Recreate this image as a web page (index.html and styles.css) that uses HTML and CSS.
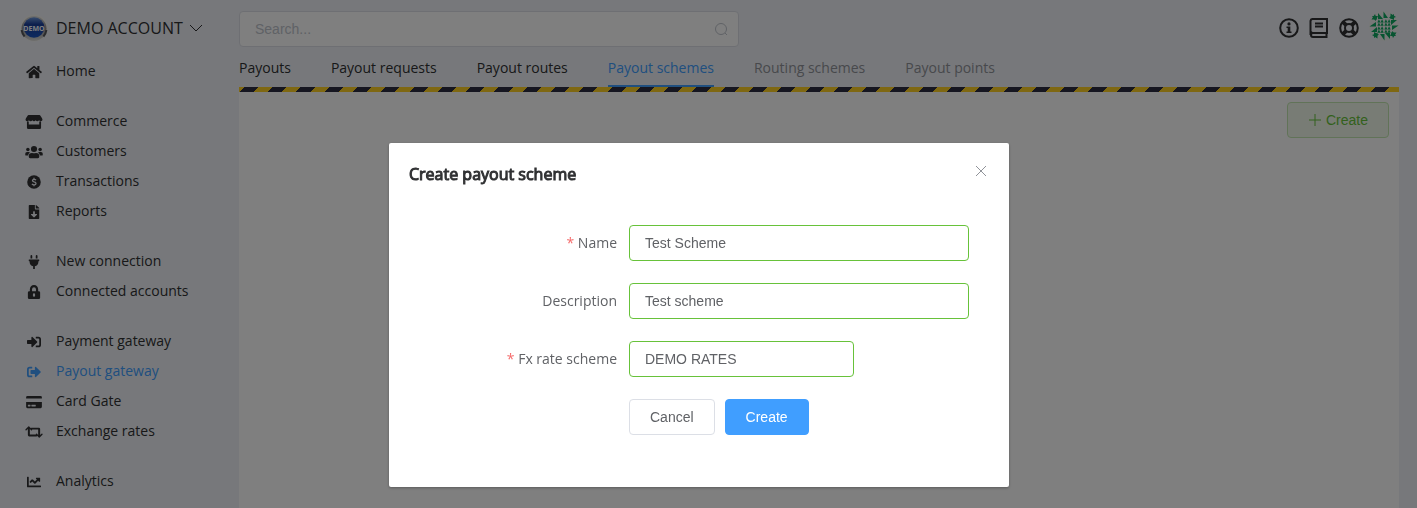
FILE: index.html
```html
<!DOCTYPE html>
<html lang="en">
<head>
<meta charset="utf-8">
<title>Payout schemes</title>
<link rel="stylesheet" href="styles.css">
</head>
<body>
<div class="app">
  <aside class="sidebar">
    <button class="account" type="button">
      <svg class="account-logo" viewBox="0 0 28 28" aria-hidden="true">
        <defs>
          <linearGradient id="ring" x1="0" y1="0" x2="0" y2="1"><stop offset="0" stop-color="#dcdcda"/><stop offset=".5" stop-color="#8d8d90"/><stop offset="1" stop-color="#dddddb"/></linearGradient>
          <linearGradient id="ball" x1="0" y1="0" x2="0" y2="1"><stop offset="0" stop-color="#6f9ade"/><stop offset=".35" stop-color="#1b3f9a"/><stop offset="1" stop-color="#1d55c0"/></linearGradient>
        </defs>
        <circle cx="14" cy="14" r="13.5" fill="#f4f3ee"/>
        <circle cx="14" cy="14.5" r="12.5" fill="url(#ring)"/>
        <path d="M1.600 16a12.600 12.600 0 0 0 3 6.500M26.400 16a12.600 12.600 0 0 1-3 6.500" fill="none" stroke="#55565a" stroke-width="2"/>
        <circle cx="14" cy="13.500" r="10.300" fill="url(#ball)"/>
        <text x="14" y="17" text-anchor="middle" class="logo-text">DEMO</text>
      </svg>
      <span>DEMO ACCOUNT</span>
      <svg class="chevron" viewBox="0 0 14 14" aria-hidden="true"><path d="M1 4l6 6 6-6"/></svg>
    </button>
    <nav class="menu">
      <div class="menu-group">
        <a href="#"><svg viewBox="0 0 576 512"><path d="M280 148L96 300v164q0 16 16 16l112-1q16 0 16-16v-95q0-16 16-16h64q16 0 16 16v95q0 17 16 17h112q16 0 16-16V300L296 148q-8-6-16 0zM571 251l-83-68V44q0-12-12-12h-56q-12 0-12 12v72l-89-74q-31-24-61 0L5 251q-9 8-2 17l26 31q8 9 17 2L280 107q8-6 16 0l235 194q9 7 17-2l25-31q8-9-2-17z"/></svg>Home</a>
      </div>
      <div class="menu-group">
        <a href="#"><svg viewBox="0 0 616 512"><path d="M500 350H116V240H50v224q0 48 48 48h420q48 0 48-48V240h-66v110zM602 118L537 14q-8-14-26-14H105Q87 0 79 14L14 118q-34 55 0 92 20 18 48 16 38-2 61-32 22 32 62 32t62-32q22 32 61 32t62-32q22 32 61 32t62-32q24 32 62 32 30 0 47-16 34-37 0-92z"/></svg>Commerce</a>
        <a href="#"><svg viewBox="0 0 640 512"><circle cx="96" cy="160" r="64"/><circle cx="544" cy="160" r="64"/><circle cx="320" cy="144" r="112"/><path d="M576 256h-64q-27 0-45 19 60 33 69 109h72q32 0 32-32v-32q0-64-64-64zM64 256q-64 0-64 64v32q0 32 32 32h72q9-76 69-109-18-19-45-19zM397 288h-8q-69 32-138 0h-8q-115 5-115 115v29q0 48 48 48h288q48 0 48-48v-29q0-110-115-115z"/></svg>Customers</a>
        <a href="#"><svg viewBox="0 0 512 512"><circle cx="256" cy="256" r="248"/><path class="cut" d="M330 185q-25-28-70-28-60 0-60 44 0 36 60 53 70 18 70 59 0 47-70 47-50 0-80-32M256 98v60M256 350v62"/></svg>Transactions</a>
        <a href="#"><svg viewBox="0 0 384 512"><path d="M224 136V0H24Q0 0 0 24v464q0 24 24 24h336q24 0 24-24V160H248q-24 0-24-24zm77 217l-96 95q-13 12-26 0l-96-95q-14-17 6-25h71v-80q0-24 16-24h32q16 0 16 24v80h70q20 8 7 25zM256 0v128h128q0-14-7-23L279 7q-9-7-23-7z"/></svg>Reports</a>
      </div>
      <div class="menu-group">
        <a href="#"><svg viewBox="0 0 384 512"><path d="M320 32q0-32-32-32t-32 32v96h64zM128 32q0-32-32-32T64 32v96h64zm240 128H16q-16 0-16 16v32q0 16 16 16h16v32q2 126 128 157v99h64v-99q126-31 128-157v-32h16q16 0 16-16v-32q0-16-16-16z"/></svg>New connection</a>
        <a href="#"><svg viewBox="0 0 448 512"><path fill-rule="evenodd" d="M400 224h-24v-72Q366 8 224 0 82 8 72 152v72H48q-48 0-48 48v192q0 48 48 48h352q48 0 48-48V272q0-48-48-48zM264 392q0 40-40 40t-40-40v-48q0-40 40-40t40 40zm32-168H152v-72q4-68 72-72 68 4 72 72z"/></svg>Connected accounts</a>
      </div>
      <div class="menu-group">
        <a href="#"><svg viewBox="0 0 512 512"><path d="M416 448h-84q-12 0-12-12v-40q0-12 12-12h84q32 0 32-32V160q0-32-32-32h-84q-12 0-12-12V76q0-12 12-12h84q96 0 96 96v192q0 96-96 96zm-47-209L201 71q-25-19-41 17v96H24q-24 0-24 24v96q0 24 24 24h136v96q16 36 41 17l168-168q14-17 0-34z"/></svg>Payment gateway</a>
        <a href="#" class="active" aria-current="page"><svg viewBox="0 0 512 512"><path d="M497 273L329 441q-25 18-41-17v-96H152q-24 0-24-24v-96q0-24 24-24h136V88q16-36 41-17l168 168q14 17 0 34zM192 436v-40q0-12-12-12H96q-32 0-32-32V160q0-32 32-32h84q12 0 12-12V76q0-12-12-12H96Q0 64 0 160v192q0 96 96 96h84q12 0 12-12z"/></svg>Payout gateway</a>
        <a href="#"><svg viewBox="0 0 576 512"><path fill-rule="evenodd" d="M0 432q0 48 48 48h480q48 0 48-48V256H0zm192-68q0-12 12-12h136q12 0 12 12v40q0 12-12 12H204q-12 0-12-12zm-128 0q0-12 12-12h72q12 0 12 12v40q0 12-12 12H76q-12 0-12-12zM576 80v48H0V80q0-48 48-48h480q48 0 48 48z"/></svg>Card Gate</a>
        <a href="#"><svg viewBox="0 0 640 512"><path d="M629 357L529 457q-17 14-34 0L395 357q-18-20 0-37 17-14 34 0l43 43V168H260q-12 0-19-7l-32-32q-10-25 17-33h270q48 0 48 48v219l51-43q17-14 34 0 18 17 0 37zM399 351l32 32q10 25-17 33H144q-48 0-48-48V149l-51 43q-17 14-34 0-18-17 0-37L111 55q17-14 34 0l100 100q18 20 0 37-17 14-34 0l-43-43v195h212q12 0 19 7z"/></svg>Exchange rates</a>
      </div>
      <div class="menu-group">
        <a href="#"><svg viewBox="0 0 512 512"><path d="M496 384H64V80q0-16-16-16H16Q0 64 0 80v336q0 32 32 32h464q16 0 16-16v-32q0-16-16-16zM464 96H346q-30 2-17 41l32 32-73 73-73-73q-23-18-46 0l-68 68q-14 12 0 24l22 22q12 12 24 0l45-46 73 74q23 18 46 0l96-97 32 33q38 14 41-17V112q0-16-16-16z"/></svg>Analytics</a>
      </div>
    </nav>
  </aside>

  <main class="main">
    <header class="topbar">
      <label class="search">
        <input type="text" placeholder="Search..." aria-label="Search">
        <svg viewBox="0 0 14 14" aria-hidden="true"><circle cx="7" cy="7" r="5.500"/><path d="M11 11l2 2"/></svg>
      </label>
      <div class="tools">
        <button type="button" aria-label="Information"><svg viewBox="0 0 20 20"><circle class="line" cx="10" cy="10" r="8.800"/><circle cx="10" cy="5.900" r="1.600"/><path d="M7.500 8.500h3.800v5h1.200V15h-5v-1.500h1.200V10H7.500z"/></svg></button>
        <button type="button" aria-label="Documentation"><svg viewBox="0 0 20 20"><path class="line" d="M4 1h14v14H4a2.300 2.300 0 0 1-2.500-2V3A2.300 2.300 0 0 1 4 1zM4 15a2 2 0 0 0 0 4h14.500M17.500 15v4M6 5.500h8M6 8.500h8M1.500 3v14"/></svg></button>
        <button type="button" aria-label="Support"><svg viewBox="0 0 20 20"><circle class="line" cx="10" cy="10" r="8.800"/><circle class="line" cx="10" cy="10" r="4"/><path class="spoke" d="M3.800 3.800l3.400 3.400M12.800 12.800l3.400 3.400M16.200 3.800l-3.400 3.400M7.200 12.800l-3.400 3.400"/></svg></button>
        <button type="button" aria-label="Profile"><svg class="avatar" viewBox="0 0 30 30">
          <defs>
            <g id="tile"><path d="M0 3.200L1.600 0l1.600 3.200zM3.200 3.200L4.800 0l1.600 3.200zM0 6.400l1.600-3.200 1.600 3.200zM3.200 6.400l1.600-3.200 1.600 3.200z"/></g>
            <g id="edge"><path d="M9 8V2l5 6zM14.500 7V.5L19 7zM20 6.500l5-3.500v6zM8 8.500H2.500L6 3z"/></g>
          </defs>
          <circle cx="15" cy="15" r="15" fill="#f0f0f0"/>
          <g fill="#10a862">
            <use href="#tile" x="8.300" y="8.300"/><use href="#tile" x="15.300" y="8.300"/><use href="#tile" x="8.300" y="15.300"/><use href="#tile" x="15.300" y="15.300"/>
            <use href="#edge"/><use href="#edge" transform="rotate(90 15 15)"/><use href="#edge" transform="rotate(180 15 15)"/><use href="#edge" transform="rotate(270 15 15)"/>
          </g>
        </svg></button>
      </div>
    </header>
    <nav class="tabs">
      <a href="#">Payouts</a>
      <a href="#">Payout requests</a>
      <a href="#">Payout routes</a>
      <a href="#" class="selected" aria-current="page">Payout schemes</a>
      <a href="#" class="muted">Routing schemes</a>
      <a href="#" class="muted">Payout points</a>
    </nav>
    <section class="content">
      <div class="hazard"></div>
      <div class="actions">
        <button class="button create" type="button"><svg viewBox="0 0 14 14" aria-hidden="true"><path d="M7 1v12M1 7h12"/></svg>Create</button>
      </div>
    </section>
  </main>
</div>

<div class="overlay">
  <form class="dialog" role="dialog" aria-modal="true" aria-labelledby="dialog-title">
    <header class="dialog-header">
      <h2 id="dialog-title">Create payout scheme</h2>
      <button class="close" type="button" aria-label="Close"><svg viewBox="0 0 16 16"><path d="M3 3l10 10M13 3L3 13"/></svg></button>
    </header>
    <div class="dialog-body">
      <div class="field"><label for="name"><span class="required">*</span> Name</label><input id="name" type="text" value="Test Scheme" required></div>
      <div class="field"><label for="description">Description</label><input id="description" type="text" value="Test scheme"></div>
      <div class="field"><label for="rates"><span class="required">*</span> Fx rate scheme</label><select id="rates" required><option>DEMO RATES</option></select></div>
      <div class="form-actions"><button class="button" type="button">Cancel</button><button class="button primary" type="submit">Create</button></div>
    </div>
  </form>
</div>
</body>
</html>
```
FILE: styles.css
```css
* { box-sizing: border-box; }

body {
  margin: 0;
  height: 100vh;
  overflow: hidden;
  background: #eef0f6;
  color: #303133;
  font: 14px/20px "Open Sans", sans-serif;
}

a { color: inherit; text-decoration: none; }

button, input, select {
  margin: 0;
  font: 14px/20px "Liberation Sans", Arial, sans-serif;
}

button { cursor: pointer; }

.app { display: flex; height: 100%; }

/* Sidebar */
.sidebar { flex: 0 0 239px; }

.account {
  display: flex;
  align-items: center;
  width: 100%;
  height: 56px;
  padding: 0 0 0 20px;
  border: 0;
  background: none;
  color: inherit;
  font: 16px/24px "Open Sans", sans-serif;
}

.account-logo { width: 28px; height: 28px; margin-right: 8px; }

.logo-text {
  fill: #fff;
  font: bold 7px "Open Sans", Arial, sans-serif;
}

.chevron {
  width: 14px;
  height: 14px;
  margin-left: 6px;
  fill: none;
  stroke: #303133;
}

.menu { display: flex; flex-direction: column; gap: 20px; }

.menu-group a {
  display: flex;
  align-items: center;
  height: 30px;
  padding-left: 24px;
}

.menu-group svg {
  width: 20px;
  height: 14px;
  margin: 2px 12px 0 0;
  fill: currentColor;
}

.menu-group .cut { fill: none; stroke: #eef0f6; stroke-width: 46; }

.menu-group .active { color: #409eff; }

/* Main column */
.main {
  display: flex;
  flex: 1;
  flex-direction: column;
  min-width: 0;
  padding-right: 18px;
}

.topbar {
  display: flex;
  align-items: center;
  justify-content: space-between;
  height: 58px;
}

.search {
  display: flex;
  align-items: center;
  width: 500px;
  height: 36px;
  padding: 0 10px 0 15px;
  border: 1px solid #dcdfe6;
  border-radius: 4px;
  background: #fff;
}

.search input {
  flex: 1;
  min-width: 0;
  padding: 0;
  border: 0;
  outline: 0;
  background: none;
}

.search input::placeholder { color: #c0c4cc; }

.search svg { width: 14px; height: 14px; fill: none; stroke: #c0c4cc; }

.tools { display: flex; align-items: center; gap: 10px; padding-bottom: 2px; }

.tools button {
  display: flex;
  padding: 0;
  border: 0;
  background: none;
  color: #303133;
}

.tools svg { width: 20px; height: 20px; fill: currentColor; }

.tools .line { fill: none; stroke: currentColor; stroke-width: 2; }

.tools .spoke { fill: none; stroke: currentColor; stroke-width: 4; }

.tools .avatar { width: 30px; height: 30px; margin-bottom: 4px; }

.tabs { display: flex; gap: 40px; height: 29px; }

.tabs a { border-bottom: 2px solid transparent; white-space: nowrap; }

.tabs .selected { border-color: #409eff; color: #409eff; }

.tabs .muted { color: #909399; }

.content { flex: 1; background: #fff; }

.hazard {
  height: 5px;
  background: repeating-linear-gradient(-45deg, #ffd025 0 10px, #2c2c40 10px 20px);
}

.actions { display: flex; justify-content: flex-end; padding: 10px; }

.button {
  display: flex;
  align-items: center;
  justify-content: center;
  height: 36px;
  padding: 0 20px;
  border: 1px solid #dcdfe6;
  border-radius: 4px;
  background: #fff;
  color: #606266;
}

.button.create { gap: 4px; border-color: #c2e7b0; background: #f0f9eb; color: #67c23a; }

.button.create svg { width: 14px; height: 14px; fill: none; stroke: currentColor; }

.button.primary { border-color: #409eff; background: #409eff; color: #fff; }

/* Dialog */
.overlay {
  position: fixed;
  inset: 0;
  display: flex;
  align-items: flex-start;
  justify-content: center;
  padding: 143px 19px 0 0;
  background: rgba(0, 0, 0, 0.5);
}

.dialog {
  width: 620px;
  border-radius: 2px;
  background: #fff;
  box-shadow: 0 1px 3px rgba(0, 0, 0, 0.3);
}

.dialog-header {
  display: flex;
  justify-content: space-between;
  padding: 20px 20px 10px;
}

.dialog-header h2 {
  margin: 0;
  font-size: 16px;
  font-weight: 400;
  line-height: 22px;
  -webkit-text-stroke: 1px currentColor;
}

.close {
  display: flex;
  width: 16px;
  height: 16px;
  padding: 0;
  border: 0;
  background: none;
}

.close svg { width: 16px; height: 16px; fill: none; stroke: #909399; }

.dialog-body {
  display: grid;
  gap: 22px;
  padding: 30px 40px 52px 20px;
  color: #606266;
}

.field { display: flex; align-items: center; }

.field label { flex: 0 0 220px; padding-right: 12px; text-align: right; }

.required { color: #f56c6c; }

.field input, .field select {
  width: 340px;
  height: 36px;
  padding: 0 15px;
  border: 1px solid #67c23a;
  border-radius: 4px;
  outline: 0;
  appearance: none;
  background: #fff;
  color: #606266;
}

.field select { width: 225px; }

.form-actions { display: flex; gap: 10px; padding-left: 220px; }
```
